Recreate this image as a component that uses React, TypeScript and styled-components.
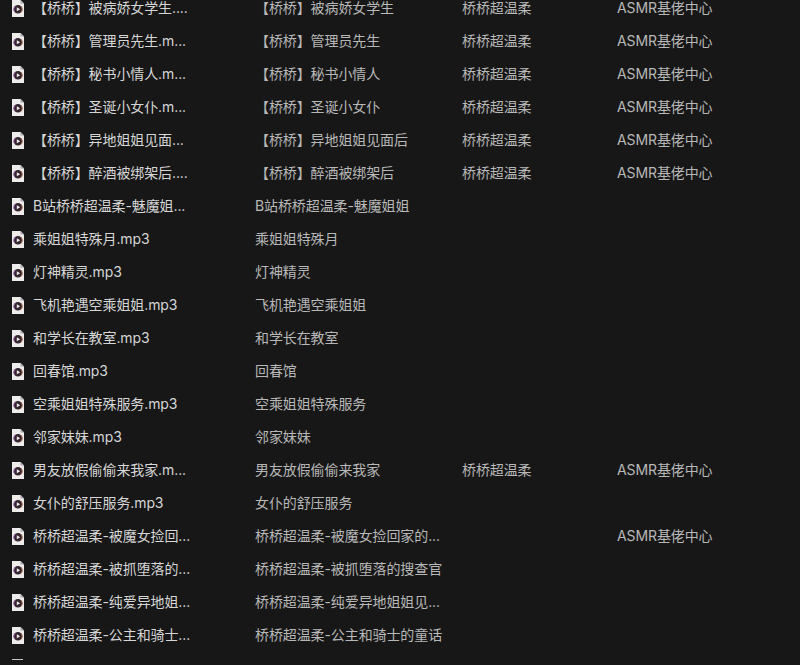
import React from 'react';
import styled, { createGlobalStyle } from 'styled-components';

type Track = {
  file: string;
  title?: string;
  artist?: string;
  album?: string;
};

const ARTIST = '桥桥超温柔';
const ALBUM = 'ASMR基佬中心';

const tracks: Track[] = [
  { file: '【桥桥】被病娇女学生....', title: '【桥桥】被病娇女学生', artist: ARTIST, album: ALBUM },
  { file: '【桥桥】管理员先生.m...', title: '【桥桥】管理员先生', artist: ARTIST, album: ALBUM },
  { file: '【桥桥】秘书小情人.m...', title: '【桥桥】秘书小情人', artist: ARTIST, album: ALBUM },
  { file: '【桥桥】圣诞小女仆.m...', title: '【桥桥】圣诞小女仆', artist: ARTIST, album: ALBUM },
  { file: '【桥桥】异地姐姐见面...', title: '【桥桥】异地姐姐见面后', artist: ARTIST, album: ALBUM },
  { file: '【桥桥】醉酒被绑架后....', title: '【桥桥】醉酒被绑架后', artist: ARTIST, album: ALBUM },
  { file: 'B站桥桥超温柔-魅魔姐...', title: 'B站桥桥超温柔-魅魔姐姐' },
  { file: '乘姐姐特殊月.mp3', title: '乘姐姐特殊月' },
  { file: '灯神精灵.mp3', title: '灯神精灵' },
  { file: '飞机艳遇空乘姐姐.mp3', title: '飞机艳遇空乘姐姐' },
  { file: '和学长在教室.mp3', title: '和学长在教室' },
  { file: '回春馆.mp3', title: '回春馆' },
  { file: '空乘姐姐特殊服务.mp3', title: '空乘姐姐特殊服务' },
  { file: '邻家妹妹.mp3', title: '邻家妹妹' },
  { file: '男友放假偷偷来我家.m...', title: '男友放假偷偷来我家', artist: ARTIST, album: ALBUM },
  { file: '女仆的舒压服务.mp3', title: '女仆的舒压服务' },
  { file: '桥桥超温柔-被魔女捡回...', title: '桥桥超温柔-被魔女捡回家的...', album: ALBUM },
  { file: '桥桥超温柔-被抓堕落的...', title: '桥桥超温柔-被抓堕落的搜查官' },
  { file: '桥桥超温柔-纯爱异地姐...', title: '桥桥超温柔-纯爱异地姐姐见...' },
  { file: '桥桥超温柔-公主和骑士...', title: '桥桥超温柔-公主和骑士的童话' },
];

const AudioFileIcon = () => (
  <svg width="12" height="17" viewBox="0 0 12 17">
    <path d="M0 0H8.5L12 3.5V17H0Z" fill="#eeebeb" />
    <path d="M8.5 0V3.5H12Z" fill="#a9a9ae" />
    <circle cx="6" cy="9.3" r="4.3" fill="#33262e" />
    <path d="M2.9 12.2A4.3 4.3 0 0 1 3.7 5.7" fill="none" stroke="#9a5fb0" strokeWidth="1" />
    <path d="M8.9 6.2A4.3 4.3 0 0 1 8.5 12.8" fill="none" stroke="#b5724a" strokeWidth="1" />
    <path d="M4.8 7.3L8.1 9.3L4.8 11.3Z" fill="#f4f0f0" />
  </svg>
);

const App = () => (
  <Page>
    <GlobalStyle />
    <List>
      {tracks.map((track, i) => (
        <Row key={i}>
          <IconCell>
            <AudioFileIcon />
          </IconCell>
          <FileName>{track.file}</FileName>
          <Cell>{track.title}</Cell>
          <Cell>{track.artist}</Cell>
          <Cell>{track.album}</Cell>
        </Row>
      ))}
      <Row>
        <NextIconEdge />
      </Row>
    </List>
  </Page>
);

export default App;

const GlobalStyle = createGlobalStyle`
  html, body {
    margin: 0;
    padding: 0;
    background: #171717;
    overflow: hidden;
  }
`;

const Page = styled.div`
  width: 800px;
  height: 665px;
  overflow: hidden;
  background: #171717;
  font-family: 'Inter', 'Noto Sans CJK SC', sans-serif;
  font-size: 14px;
  letter-spacing: -0.1px;
`;

const List = styled.div`
  display: flex;
  flex-direction: column;
  margin-top: -8px;
`;

const Row = styled.div`
  display: grid;
  grid-template-columns: 33px 222px 207px 155px 1fr;
  height: 33px;
  align-items: center;
`;

const IconCell = styled.div`
  display: flex;
  padding-left: 12px;
`;

const NextIconEdge = styled.div`
  align-self: start;
  margin: 7px 0 0 12px;
  width: 11px;
  height: 1px;
  background: #c4c4c4;
`;

const Cell = styled.div`
  color: #b8b8b8;
  white-space: nowrap;
  line-height: 13px;
  padding-bottom: 2px;
`;

const FileName = styled(Cell)`
  color: #d6d6d6;
`;
